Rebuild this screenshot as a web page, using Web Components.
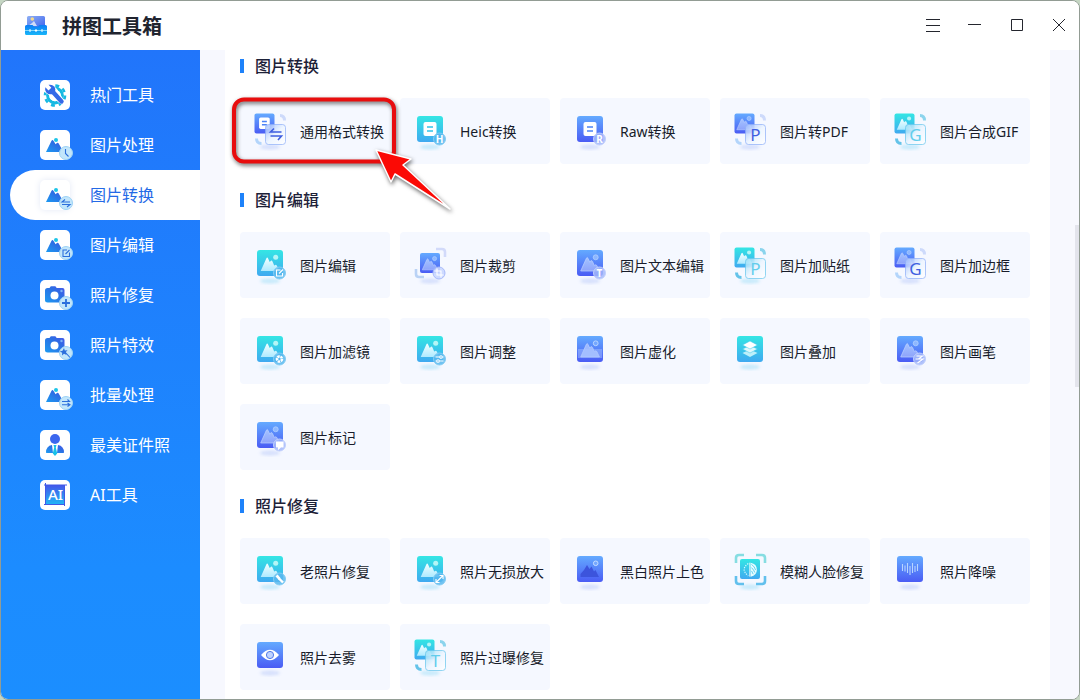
<!DOCTYPE html>
<html lang="zh-CN">
<head>
<meta charset="utf-8">
<title>拼图工具箱</title>
<style>
    html, body {
        height: 100%;
        margin: 0;
    }
    body {
        background: #c5d6c3;
        font-family: "Noto Sans", "Noto Sans CJK SC", sans-serif;
        color: #1c2233;
    }
</style>
</head>
<body>
<app-window>
    <title-bar slot="header">拼图工具箱</title-bar>
    <side-nav slot="nav">
        <nav-item icon="hot">热门工具</nav-item>
        <nav-item icon="photo" badge="clock">图片处理</nav-item>
        <nav-item icon="photo" badge="swap" active>图片转换</nav-item>
        <nav-item icon="photo" badge="edit">图片编辑</nav-item>
        <nav-item icon="camera" badge="plus">照片修复</nav-item>
        <nav-item icon="camera" badge="wand">照片特效</nav-item>
        <nav-item icon="photo" badge="batch">批量处理</nav-item>
        <nav-item icon="person">最美证件照</nav-item>
        <nav-item icon="ai">AI工具</nav-item>
    </side-nav>

    <tool-section heading="图片转换">
        <tool-card kind="duo" art="doc" mark="convert">通用格式转换</tool-card>
        <tool-card kind="tile" tone="cyan" art="doc" mark="H">Heic转换</tool-card>
        <tool-card kind="tile" art="doc" mark="R">Raw转换</tool-card>
        <tool-card kind="duo" art="photo" mark="P">图片转PDF</tool-card>
        <tool-card kind="duo" tone="cyan" art="photo" mark="G">图片合成GIF</tool-card>
    </tool-section>
    <tool-section heading="图片编辑">
        <tool-card kind="tile" tone="cyan" art="photo" mark="edit">图片编辑</tool-card>
        <tool-card kind="crop" art="photo" mark="crop">图片裁剪</tool-card>
        <tool-card kind="tile" art="photo" mark="T">图片文本编辑</tool-card>
        <tool-card kind="duo" tone="cyan" art="photo" mark="P">图片加贴纸</tool-card>
        <tool-card kind="duo" art="photo" mark="G">图片加边框</tool-card>
        <tool-card kind="tile" tone="cyan" art="photo" mark="aperture">图片加滤镜</tool-card>
        <tool-card kind="tile" tone="cyan" art="photo" mark="sliders">图片调整</tool-card>
        <tool-card kind="tile" art="blur">图片虚化</tool-card>
        <tool-card kind="tile" tone="cyan" art="layers">图片叠加</tool-card>
        <tool-card kind="tile" art="photo" mark="brush">图片画笔</tool-card>
        <tool-card kind="tile" art="photo" mark="note">图片标记</tool-card>
    </tool-section>
    <tool-section heading="照片修复">
        <tool-card kind="tile" tone="cyan" art="photo" mark="wrench">老照片修复</tool-card>
        <tool-card kind="tile" tone="cyan" art="photo" mark="expand">照片无损放大</tool-card>
        <tool-card kind="tile" art="dark">黑白照片上色</tool-card>
        <tool-card kind="face" tone="cyan" art="face">模糊人脸修复</tool-card>
        <tool-card kind="tile" art="wave">照片降噪</tool-card>
        <tool-card kind="tile" art="eye">照片去雾</tool-card>
        <tool-card kind="duo" tone="cyan" art="photo" mark="T">照片过曝修复</tool-card>
    </tool-section>

    <callout-mark slot="overlay"></callout-mark>
</app-window>

<script>
// small base: each element just returns its markup
class BaseElement extends HTMLElement {
    connectedCallback() {
        if (this.shadowRoot) return;
        this.attachShadow({ mode: 'open' });
        const template = document.createElement('template');
        template.innerHTML = this.render();
        this.shadowRoot.appendChild(template.content.cloneNode(true));
    }
}

class AppWindow extends BaseElement {
    render() {
        return `
            <style>
                :host {
                    display: flex;
                    flex-direction: column;
                    box-sizing: border-box;
                    height: 100vh;
                    border: 1px solid #929c94;
                    border-radius: 8px;
                    overflow: hidden;
                    background: #fff;
                }
                .body {
                    position: relative;
                    display: flex;
                    flex: 1;
                    min-height: 0;
                }
                .content {
                    flex: 1;
                    min-width: 0;
                    padding: 0 29px 0 25px;
                    background: #f7f8fe;
                }
                .panel {
                    position: relative;
                    box-sizing: border-box;
                    height: 100%;
                    padding: 0 20px 0 15px;
                    overflow: hidden;
                    background: #fff;
                }
                ::slotted(tool-section:first-of-type) {
                    margin-top: -20px;
                }
                .thumb {
                    position: absolute;
                    right: 0;
                    top: 27%;
                    width: 4px;
                    height: 25%;
                    background: #e3e4ec;
                }
            </style>
            <slot name="header"></slot>
            <div class="body">
                <slot name="nav"></slot>
                <main class="content">
                    <div class="panel">
                        <slot></slot>
                        <slot name="overlay"></slot>
                    </div>
                </main>
                <div class="thumb"></div>
            </div>
        `;
    }
}

class TitleBar extends BaseElement {
    render() {
        return `
            <style>
                :host {
                    display: flex;
                    align-items: center;
                    height: 49px;
                    padding-left: 23px;
                    background: #fff;
                }
                h1 {
                    flex: 1;
                    margin: 0 0 0 14px;
                    padding-top: 2px;
                    font-size: 20px;
                    line-height: 28px;
                    font-weight: 700;
                    color: #20242f;
                }
                .tools {
                    display: flex;
                }
                button {
                    display: grid;
                    place-items: center;
                    width: 42px;
                    height: 49px;
                    padding: 0;
                    border: 0;
                    background: none;
                }
                button svg {
                    fill: none;
                    stroke: #24262e;
                }
            </style>
            <svg width="24" height="23" viewBox="0 0 24 23">
                <defs>
                    <linearGradient id="pic" x1="0" x2="1" y1="0" y2="1">
                        <stop offset="0" stop-color="#8fb0f4"/>
                        <stop offset="1" stop-color="#3d63ee"/>
                    </linearGradient>
                    <linearGradient id="box" x1="0" x2="0" y1="0" y2="1">
                        <stop offset="0" stop-color="#0c7df5"/>
                        <stop offset="1" stop-color="#18b6f8"/>
                    </linearGradient>
                </defs>
                <rect x="3" y="2" width="18" height="12" rx="1.5" fill="url(#pic)"/>
                <path d="M4 12l4-3 2-2 3 5z" fill="#cfdcf8"/>
                <circle cx="8.300" cy="5" r="1.800" fill="#f4d98c"/>
                <path d="M2.500 11h6l1.500 1.500h4l1.500-1.500h6q1.500 0 1.500 1.500V19.500q0 1.500-1.500 1.500h-19Q1 21 1 19.500V12.500Q1 11 2.500 11z" fill="url(#box)"/>
                <path d="M1 16.500h22" stroke="#9eeaff" stroke-width=".8"/>
                <path d="M6 15v3M18 15v3" stroke="#fff"/>
                <path d="M12 15l1.500 1.500-1.500 1.500-1.500-1.500z" fill="#fff"/>
            </svg>
            <h1><slot></slot></h1>
            <div class="tools">
                <button aria-label="菜单"><svg width="16" height="15"><path d="M2 1.500h14M2 7.500h14M2 13.500h14"/></svg></button>
                <button aria-label="最小化"><svg width="16" height="15"><path d="M2 6.500h13"/></svg></button>
                <button aria-label="最大化"><svg width="16" height="15"><path d="M3.500 1.500h11v11h-11z"/></svg></button>
                <button aria-label="关闭"><svg width="16" height="15"><path d="M3 1l12 12M15 1L3 13"/></svg></button>
            </div>
        `;
    }
}

class SideNav extends BaseElement {
    render() {
        return `
            <style>
                :host {
                    display: block;
                    width: 199px;
                    background: linear-gradient(#2175fb, #1c8cff 80%, #1b8eff);
                }
                nav {
                    display: flex;
                    flex-direction: column;
                    padding: 20px 0 0 9px;
                }
            </style>
            <nav><slot></slot></nav>
        `;
    }
}

const navIcons = {
    photo: `
        <path d="M6 22L11.400 11q1.100-1.800 2.200 0l2 3.300 1.300-1.200q1-.8 1.800.5L23.500 22z" fill="url(#g)"/>
        <circle cx="16" cy="10" r="2" fill="#1cc5e8"/>`,
    camera: `
        <path d="M7.500 8h2l1.300-1.700h4.600L16.700 8h5.800q2 0 2 2v10.500q0 2-2 2h-15q-2.500 0-2.500-2V10.500Q5 8 7.500 8z" fill="url(#g)"/>
        <circle cx="14.500" cy="15.500" r="4" fill="#fff"/>
        <circle cx="21.500" cy="11" r="1.200" fill="#7ab4fa"/>`,
    hot: `
        <circle cx="15" cy="15.500" r="7.300" fill="none" stroke="#16b9e2" stroke-width="3.200"/>
        <circle cx="15" cy="15.500" r="10" fill="none" stroke="#16b9e2" stroke-width="2.600" stroke-dasharray="3.930 3.930"/>
        <circle cx="15" cy="15.500" r="5.800" fill="#fff"/>
        <path d="M4 4l7-1 6 6 8 13-3 3L9 15l-6-4z" fill="#fff"/>
        <path d="M13 12L21.500 21.500" stroke="#3469e8" stroke-width="4.400" stroke-linecap="round"/>
        <path d="M8.500 4.800q4.500-.8 6.500 3 1.200 4-2 6.200-4 1.200-6.700-1.500Q4.500 10 5.300 7.200L8.500 10.500l2.800-2.700z" fill="#3469e8"/>`,
    person: `
        <circle cx="15" cy="9" r="5" fill="#3c67ee"/>
        <path d="M6 22.500q0-6.500 6-7.500l1 8H6.500zM24 22.500q0-6.500-6-7.500l-1 8h6.500z" fill="url(#g)"/>
        <path d="M13.500 15h3l-.7 2.500 1.400 6L15 26l-2.200-2.500 1.400-6z" fill="#18c1e8"/>`,
    ai: `
        <rect x="5" y="5" width="20" height="19" fill="url(#ai)"/>
        <path d="M4 5h23M5.500 3v21M4 24.500h20M24.500 6v20" stroke="#4059e6" stroke-width="1"/>
        <text x="15.500" y="20" font-size="15" font-weight="500" fill="#fff" text-anchor="middle" font-family="Noto Sans">AI</text>`
};

const navBadges = {
    clock: '<path d="M-.5-4V.5L2.500 3.500"/>',
    swap: '<path d="M4-1H-4L-1-3.500M-4 1.500H4L1 4"/>',
    edit: '<path d="M1-3H-3V3.500H3.500V-.5M-.5 1L3.500-3"/>',
    plus: '<path d="M-4 0H4M0-4V4" stroke-width="1.800"/>',
    wand: '<path d="M-1-1L4 4.500"/><path d="M-2-5l.8 2.500 2.800-.2-2 2 1 2.600-2.600-1.200-2 1.800.2-2.700-2.400-1.300 2.700-.7z" fill="#2c6fdc" stroke="none"/>',
    batch: '<path d="M-4-1.500H3.500L1.500-3.500M4 1.800H-4M1.500 0L4 1.800 1.500 3.500"/>'
};

class NavItem extends BaseElement {
    render() {
        const badge = this.getAttribute('badge');
        return `
            <style>
                :host {
                    display: block;
                    color: #fff;
                }
                :host([active]) {
                    color: #2469e6;
                    background: #fff;
                    border-radius: 25px 0 0 25px;
                }
                a {
                    display: flex;
                    align-items: center;
                    gap: 20px;
                    height: 50px;
                    padding-left: 30px;
                    font-size: 16px;
                    line-height: 24px;
                    color: inherit;
                    text-decoration: none;
                }
                svg {
                    overflow: visible;
                }
                :host([active]) .plate {
                    filter: drop-shadow(0 0 3px #e3e8f6);
                }
            </style>
            <a href="#">
                <svg width="30" height="30" viewBox="0 0 30 30">
                    <defs>
                        <linearGradient id="g" x1="1" x2="0" y1="0" y2="1">
                            <stop offset="0" stop-color="#4a58ea"/>
                            <stop offset=".4" stop-color="#2c6ee4"/>
                            <stop offset="1" stop-color="#1d9bf2"/>
                        </linearGradient>
                        <linearGradient id="ai" x1="0" x2="0" y1="0" y2="1">
                            <stop offset="0" stop-color="#4457ea"/>
                            <stop offset="1" stop-color="#22b4f5"/>
                        </linearGradient>
                    </defs>
                    <rect class="plate" width="30" height="30" rx="5" fill="#fff"/>
                    ${navIcons[this.getAttribute('icon')]}
                    ${badge ? `
                        <circle cx="26" cy="23" r="6.500" fill="#c2e6fb" stroke="#9dd3f6"/>
                        <g transform="translate(26 23)" fill="none" stroke="#2c6fdc" stroke-width="1.100">${navBadges[badge]}</g>` : ''}
                </svg>
                <span><slot></slot></span>
            </a>
        `;
    }
}

class ToolSection extends BaseElement {
    render() {
        return `
            <style>
                :host {
                    display: block;
                }
                h2 {
                    display: flex;
                    align-items: center;
                    gap: 11px;
                    margin: 0;
                    padding: 25px 0 21px;
                    font-size: 16px;
                    line-height: 22px;
                    font-weight: 500;
                    color: #1d2138;
                }
                h2::before {
                    content: "";
                    width: 4px;
                    height: 14px;
                    background: #1e82fa;
                }
                .grid {
                    display: grid;
                    grid-template-columns: repeat(5, minmax(0, 1fr));
                    gap: 20px 10px;
                }
            </style>
            <h2>${this.getAttribute('heading')}</h2>
            <div class="grid"><slot></slot></div>
        `;
    }
}

// glyphs inside the round badge, drawn around 0,0
const marks = {
    convert: '<path d="M6-2H-5L-1.500-5.500M-5 2H6L2.500 6" stroke-width="1.600"/>',
    edit: '<path d="M1-3H-3V3H3V0M-.5 .5L3.500-3.500"/>',
    crop: '<path d="M-2-4.500V2H4.500M-4.500-2H2V4.500"/>',
    aperture: '<circle r="2.500" stroke-width="2.600" stroke-dasharray="2.400 .7"/>',
    sliders: '<path d="M-4-2H0M3-2H4M-4 2H-3M0 2H4"/><circle cx="1.500" cy="-2" r="1.300"/><circle cx="-1.500" cy="2" r="1.300"/>',
    brush: '<path d="M-3-3H3L-1 0H3.500L-2 4M-4 0H-1"/>',
    note: '<path d="M-3-3H3.500V2H1L-1 4V2H-3z" fill="#fff"/>',
    wrench: '<path d="M-1-1L3.500 3.500" stroke-width="2.400"/><path d="M-4-2.500L-2-4.500 1-1-.5 1z" fill="#fff" stroke="none"/>',
    expand: '<path d="M-3 3L3-3M0-3.500H3.500V0M-3.500 0V3.500H0"/>'
};

const peaks = 'M10.700 26L16.300 13.400q.9-1.700 1.800 0l1.600 3.600 1.300-1.200q.8-.6 1.500.6l1.700 4 1.100-.5q1-.4 1.700 1L29.500 26z';

class ToolCard extends BaseElement {
    art(name, tone) {
        const cyan = tone === 'cyan';
        switch (name) {
            case 'doc':
                return `<rect x="13.500" y="11" width="13" height="14" rx="2" fill="#fff"/>
                    <path d="M17 16h6M17 20h6" stroke="${cyan ? '#2fc4ea' : '#4b82f6'}" stroke-width="1.700"/>`;
            case 'photo':
                return `<path d="${peaks}" fill="url(#snow)" ${cyan ? '' : 'stroke="#bed2ff" stroke-width=".7"'}/>
                    <circle cx="25.700" cy="12.300" r="2.500" fill="${cyan ? '#b4f5f6' : '#8db7ff'}" ${cyan ? '' : 'stroke="#b8d4ff" stroke-width=".7"'}/>`;
            case 'blur':
                return `<path d="${peaks}" fill="#9db9ff" stroke="#bed2ff" stroke-width=".7"/>
                    <rect x="8" y="18" width="24" height="9" fill="#aac6ff" opacity=".45"/>
                    <circle cx="25.700" cy="12.300" r="2.400" fill="#74a7ff" stroke="#b8d4ff"/>`;
            case 'dark':
                return `<path d="M10.500 26V23l3.500-4 3-5 2.500 4 2-2.500 2.500 5 1.500-1.500 3.500 7z" fill="#3c54dc"/>
                    <circle cx="25.700" cy="12.300" r="2.300" fill="#74a7ff" stroke="#c4dcff"/>`;
            case 'layers':
                return `<path d="M20 18.500l7.500 3.500-7.500 4-7.500-4z" fill="#bdf0fa"/>
                    <path d="M20 14.500l7.500 3.500-7.500 4-7.500-4z" fill="#dff9fd" stroke="#36c6e8" stroke-width=".5"/>
                    <path d="M20 10l7.500 4-7.500 4-7.500-4z" fill="#fff" stroke="#36c6e8" stroke-width=".5"/>`;
            case 'eye':
                return `<path d="M11 18q9-10.500 18 0-9 10.500-18 0z" fill="#fff"/>
                    <circle cx="20" cy="18" r="3.600" fill="#bed2ff" stroke="#5279e8"/>`;
            case 'wave':
                return `<path d="M12.500 13v7M15 14.500v6M17.500 12v10M20 15v9M22.500 12v10M25 15v6M27.500 13v7" stroke="#b7d5ff" stroke-width="1.100"/>`;
            case 'face':
                return `<path d="M20 10v17" stroke="#fff" stroke-width="1.200"/>
                    <path d="M18 11q-10 7 0 15" fill="none" stroke="#d5fbff" stroke-width="1.500" stroke-dasharray="1.500 1.500"/>
                    <path d="M21 10q7.500 1.500 7.500 8.500T21 27z" fill="#e7fdff"/>
                    <path d="M22 12q4 3 5 7M22 16q3 3 4 6M22 20l2 4" stroke="#36bfe8" fill="none" stroke-width=".9"/>`;
        }
        return '';
    }

    glyph(mark, size, color) {
        if (marks[mark]) {
            return `<g fill="none" stroke="${color}" stroke-width="1.100">${marks[mark]}</g>`;
        }
        return `<text y="${size / 3 + 1}" font-size="${size}" font-family="Noto Sans" font-weight="${size < 12 ? 700 : 400}"
            text-anchor="middle" fill="${color}">${mark}</text>`;
    }

    icon() {
        const kind = this.getAttribute('kind');
        const tone = this.getAttribute('tone');
        const mark = this.getAttribute('mark');
        const art = this.art(this.getAttribute('art'), tone);
        const line = tone === 'cyan' ? '#65c4ed' : '#8daef8';

        if (kind === 'duo') {
            return `
                <rect x="4.500" y="2.500" width="20" height="20" rx="2" fill="url(#tile)"/>
                <g transform="translate(-2 -2.600) scale(.82)">${art}</g>
                <path d="M30 4.500q4.500 0 4.500 5" fill="none" stroke="${tone === 'cyan' ? '#8bd4ed' : '#cddafb'}" stroke-width="3"/>
                <path d="M6.500 27.500q0 5 5 5" fill="none" stroke="${tone === 'cyan' ? '#64c3e9' : '#b3d5fb'}" stroke-width="3"/>
                <rect x="15.500" y="13.500" width="20" height="20" rx="3" fill="url(#glass)" stroke="${line}" stroke-opacity=".7"/>
                <g transform="translate(25.500 23)">${this.glyph(mark, 17, tone === 'cyan' ? '#62cdec' : '#3f5fe0')}</g>`;
        }
        if (kind === 'crop' || kind === 'face') {
            const frame = kind === 'crop'
                ? '<path d="M26 4h6q3 0 3 3v5" stroke="#d2dafa"/><path d="M6 24v5q0 3 3 3h5" stroke="#b9d2f5"/>'
                : `<path d="M6 12V7q0-3 3-3h5M26 4h6q3 0 3 3v5" stroke="#86dde2"/>
                   <path d="M6 25v5q0 3 3 3h5M26 33h6q3 0 3-3v-5" stroke="#62c0ed"/>`;
            return `
                <g fill="none" stroke-width="2.600">${frame}</g>
                <rect x="10" y="8" width="20" height="20" rx="2" fill="url(#tile)"/>
                <g transform="translate(3.500 3.500) scale(.82)">${art}</g>
                ${mark ? `<circle cx="29" cy="28" r="6" fill="#c9d6ff" fill-opacity=".9" stroke="#a9bbfa"/>
                <g transform="translate(29 28)">${this.glyph(mark, 9, '#fff')}</g>` : ''}`;
        }
        return `
            <rect x="7" y="5" width="26" height="26" rx="3" fill="url(#tile)"/>
            ${art}
            ${mark ? `<circle cx="29.500" cy="28" r="6" fill="${tone === 'cyan' ? '#58b9ee' : '#a3b9fa'}" fill-opacity=".85"
                stroke="${tone === 'cyan' ? '#84cdf4' : '#c1d0fd'}"/>
            <g transform="translate(29.500 28)">${this.glyph(mark, 10, '#fff')}</g>` : ''}`;
    }

    render() {
        const cyan = this.getAttribute('tone') === 'cyan';
        return `
            <style>
                :host {
                    display: block;
                }
                button {
                    display: flex;
                    align-items: center;
                    gap: 10px;
                    box-sizing: border-box;
                    width: 100%;
                    height: 66px;
                    padding: 0 0 0 10px;
                    border: 0;
                    border-radius: 4px;
                    background: #f5f8ff;
                    font: inherit;
                    font-size: 14px;
                    line-height: 20px;
                    color: #181c2b;
                    white-space: nowrap;
                }
                svg {
                    flex: none;
                }
                span {
                    padding-top: 2px;
                }
                .shade {
                    filter: blur(1.500px);
                }
            </style>
            <button>
                <svg width="40" height="40" viewBox="0 0 40 40">
                    <defs>
                        <linearGradient id="tile" x1="0" x2="0" y1="0" y2="1">
                            <stop offset="0" stop-color="${cyan ? '#34e6e4' : '#64aaff'}"/>
                            <stop offset="1" stop-color="${cyan ? '#3fa9f0' : '#4a5cf4'}"/>
                        </linearGradient>
                        <linearGradient id="snow" x1="0" x2="0" y1="0" y2="1">
                            <stop offset="0" stop-color="${cyan ? '#f2ffff' : '#a4c3ff'}"/>
                            <stop offset="1" stop-color="${cyan ? '#aeeaff' : '#8ea4fb'}"/>
                        </linearGradient>
                        <linearGradient id="glass" x1="0" x2="1" y1="0" y2="1">
                            <stop offset="0" stop-color="${cyan ? '#8fdcf5' : '#9dbcfc'}" stop-opacity=".8"/>
                            <stop offset=".5" stop-color="#edf5ff" stop-opacity=".95"/>
                            <stop offset="1" stop-color="#fff"/>
                        </linearGradient>
                    </defs>
                    <ellipse class="shade" cx="20" cy="36" rx="10" ry="2.500" fill="${cyan ? '#c6eafb' : '#d5dffc'}"/>
                    ${this.icon()}
                </svg>
                <span><slot></slot></span>
            </button>
        `;
    }
}

// red frame and arrow laid over the first card
class CalloutMark extends BaseElement {
    render() {
        return `
            <style>
                :host {
                    position: absolute;
                    left: 0;
                    top: 40px;
                    pointer-events: none;
                }
                svg {
                    display: block;
                    filter: drop-shadow(1px 2px 2px rgba(0, 0, 0, .6));
                }
            </style>
            <svg width="240" height="130" viewBox="0 0 240 130">
                <rect x="9" y="9.500" width="160" height="62" rx="10" fill="none" stroke="#e80d0d" stroke-width="4"/>
                <path d="M151 60L186 69 178 75 225 119 170 84 166 92z" fill="#fb0a05" stroke="#fff" stroke-width="1.500" stroke-linejoin="round"/>
            </svg>
        `;
    }
}

customElements.define('app-window', AppWindow);
customElements.define('title-bar', TitleBar);
customElements.define('side-nav', SideNav);
customElements.define('nav-item', NavItem);
customElements.define('tool-section', ToolSection);
customElements.define('tool-card', ToolCard);
customElements.define('callout-mark', CalloutMark);
</script>
</body>
</html>
